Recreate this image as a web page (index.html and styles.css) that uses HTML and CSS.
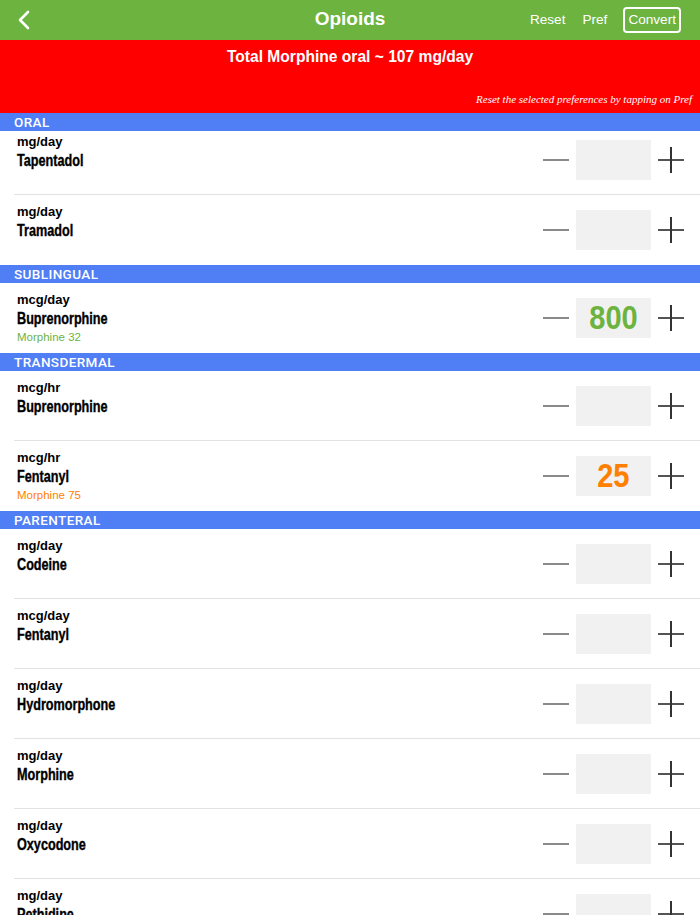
FILE: index.html
```html
<!DOCTYPE html>
<html>
<head>
<meta charset="utf-8">
<link rel="stylesheet" href="styles.css">
</head>
<body>
<header class="nav">
  <svg class="back" width="14" height="20" viewBox="0 0 14 20"><path d="M11 2 L3 10 L11 18" fill="none" stroke="#fff" stroke-width="2.6" stroke-linecap="round" stroke-linejoin="round"/></svg>
  <h1 class="title">Opioids</h1>
  <div class="actions">
    <span class="act">Reset</span>
    <span class="act">Pref</span>
    <span class="act convert">Convert</span>
  </div>
</header>
<div class="banner">
  <div class="total">Total Morphine oral ~ 107 mg/day</div>
  <div class="hint">Reset the selected preferences by tapping on Pref</div>
</div>

<section class="group">
  <div class="group-head">ORAL</div>
  <div class="row first">
    <div class="info"><div class="unit">mg/day</div><div class="name">Tapentadol</div></div>
    <div class="ctrl"><span class="minus"></span><span class="box"></span><span class="plus"></span></div>
  </div>
  <div class="row last">
    <div class="info"><div class="unit">mg/day</div><div class="name">Tramadol</div></div>
    <div class="ctrl"><span class="minus"></span><span class="box"></span><span class="plus"></span></div>
  </div>
</section>

<section class="group">
  <div class="group-head">SUBLINGUAL</div>
  <div class="row last">
    <div class="info"><div class="unit">mcg/day</div><div class="name">Buprenorphine</div><div class="sub green">Morphine 32</div></div>
    <div class="ctrl"><span class="minus"></span><span class="box green"><span class="val">800</span></span><span class="plus"></span></div>
  </div>
</section>

<section class="group">
  <div class="group-head">TRANSDERMAL</div>
  <div class="row">
    <div class="info"><div class="unit">mcg/hr</div><div class="name">Buprenorphine</div></div>
    <div class="ctrl"><span class="minus"></span><span class="box"></span><span class="plus"></span></div>
  </div>
  <div class="row last">
    <div class="info"><div class="unit">mcg/hr</div><div class="name">Fentanyl</div><div class="sub orange">Morphine 75</div></div>
    <div class="ctrl"><span class="minus"></span><span class="box orange"><span class="val">25</span></span><span class="plus"></span></div>
  </div>
</section>

<section class="group">
  <div class="group-head">PARENTERAL</div>
  <div class="row">
    <div class="info"><div class="unit">mg/day</div><div class="name">Codeine</div></div>
    <div class="ctrl"><span class="minus"></span><span class="box"></span><span class="plus"></span></div>
  </div>
  <div class="row">
    <div class="info"><div class="unit">mcg/day</div><div class="name">Fentanyl</div></div>
    <div class="ctrl"><span class="minus"></span><span class="box"></span><span class="plus"></span></div>
  </div>
  <div class="row">
    <div class="info"><div class="unit">mg/day</div><div class="name">Hydromorphone</div></div>
    <div class="ctrl"><span class="minus"></span><span class="box"></span><span class="plus"></span></div>
  </div>
  <div class="row">
    <div class="info"><div class="unit">mg/day</div><div class="name">Morphine</div></div>
    <div class="ctrl"><span class="minus"></span><span class="box"></span><span class="plus"></span></div>
  </div>
  <div class="row">
    <div class="info"><div class="unit">mg/day</div><div class="name">Oxycodone</div></div>
    <div class="ctrl"><span class="minus"></span><span class="box"></span><span class="plus"></span></div>
  </div>
  <div class="row">
    <div class="info"><div class="unit">mg/day</div><div class="name">Pethidine</div></div>
    <div class="ctrl"><span class="minus"></span><span class="box"></span><span class="plus"></span></div>
  </div>
</section>
</body>
</html>
```
FILE: styles.css
```css
html, body {
  margin: 0;
  padding: 0;
  background: #fff;
  font-family: "Liberation Sans", Arial, sans-serif;
  overflow: hidden;
}

.nav {
  height: 40px;
  background: #6db33f;
  display: flex;
  align-items: center;
  position: relative;
  color: #fff;
}
.back {
  margin-left: 17px;
}
.title {
  position: absolute;
  left: 0;
  right: 0;
  top: 0;
  margin: 0;
  text-align: center;
  line-height: 38px;
  font-size: 19px;
  font-weight: bold;
  pointer-events: none;
}
.actions {
  margin-left: auto;
  margin-right: 19px;
  display: flex;
  align-items: center;
  gap: 17px;
  font-size: 13.6px;
}
.act {
  line-height: 20px;
}
.convert {
  border: 2px solid #fff;
  border-radius: 4px;
  padding: 1px 3px;
  margin-left: -1px;
}

.banner {
  background: #ff0000;
  height: 73px;
  color: #fff;
  display: flex;
  flex-direction: column;
}
.total {
  text-align: center;
  font-weight: bold;
  font-size: 15.6px;
  line-height: 20px;
  margin-top: 7px;
}
.hint {
  margin-top: auto;
  margin-bottom: 7px;
  text-align: right;
  padding-right: 8px;
  font-family: "Liberation Serif", "Times New Roman", serif;
  font-style: italic;
  font-size: 11px;
  line-height: 14px;
}

.group-head {
  background: #4f7ef5;
  color: #fff;
  height: 18px;
  line-height: 18px;
  padding-left: 14px;
  font-family: Roboto, "Liberation Sans", sans-serif;
  font-weight: 500;
  font-size: 13.5px;
  letter-spacing: 0.4px;
}

.row {
  box-sizing: border-box;
  height: 70px;
  margin-left: 14px;
  padding-left: 3px;
  padding-right: 16px;
  border-bottom: 1px solid #e2e2e2;
  display: flex;
  align-items: center;
}
.row.last {
  border-bottom: none;
}
.row.first {
  height: 64px;
  padding-bottom: 6px;
}
.info {
  align-self: flex-start;
  padding-top: 9px;
  color: #000;
}
.row.first .info {
  padding-top: 3px;
}
.unit {
  font-size: 13px;
  font-weight: bold;
  line-height: 16px;
}
.name {
  font-weight: bold;
  font-size: 16px;
  line-height: 21px;
  transform: scaleX(0.79);
  transform-origin: left center;
  white-space: nowrap;
  -webkit-text-stroke: 0.35px #000;
}
.sub {
  font-size: 11.5px;
  line-height: 16px;
}
.green { color: #6db33f; }
.orange { color: #ff7f00; }

.ctrl {
  margin-left: auto;
  display: flex;
  align-items: center;
  gap: 7px;
}
.minus {
  width: 26px;
  height: 2px;
  background: #8a8a8a;
}
.box {
  width: 75px;
  height: 40px;
  background: #f1f1f1;
  display: flex;
  align-items: center;
  justify-content: center;
  font-weight: bold;
  font-size: 33px;
}
.val {
  display: inline-block;
  transform: scaleX(0.88);
  line-height: 40px;
}
.plus {
  width: 26px;
  height: 26px;
  position: relative;
}
.plus::before,
.plus::after {
  content: "";
  position: absolute;
  background: #333;
}
.plus::before {
  left: 0;
  right: 0;
  top: 12px;
  height: 2px;
  background: #555;
}
.plus::after {
  top: 0;
  bottom: 0;
  left: 12px;
  width: 1.5px;
}
```
